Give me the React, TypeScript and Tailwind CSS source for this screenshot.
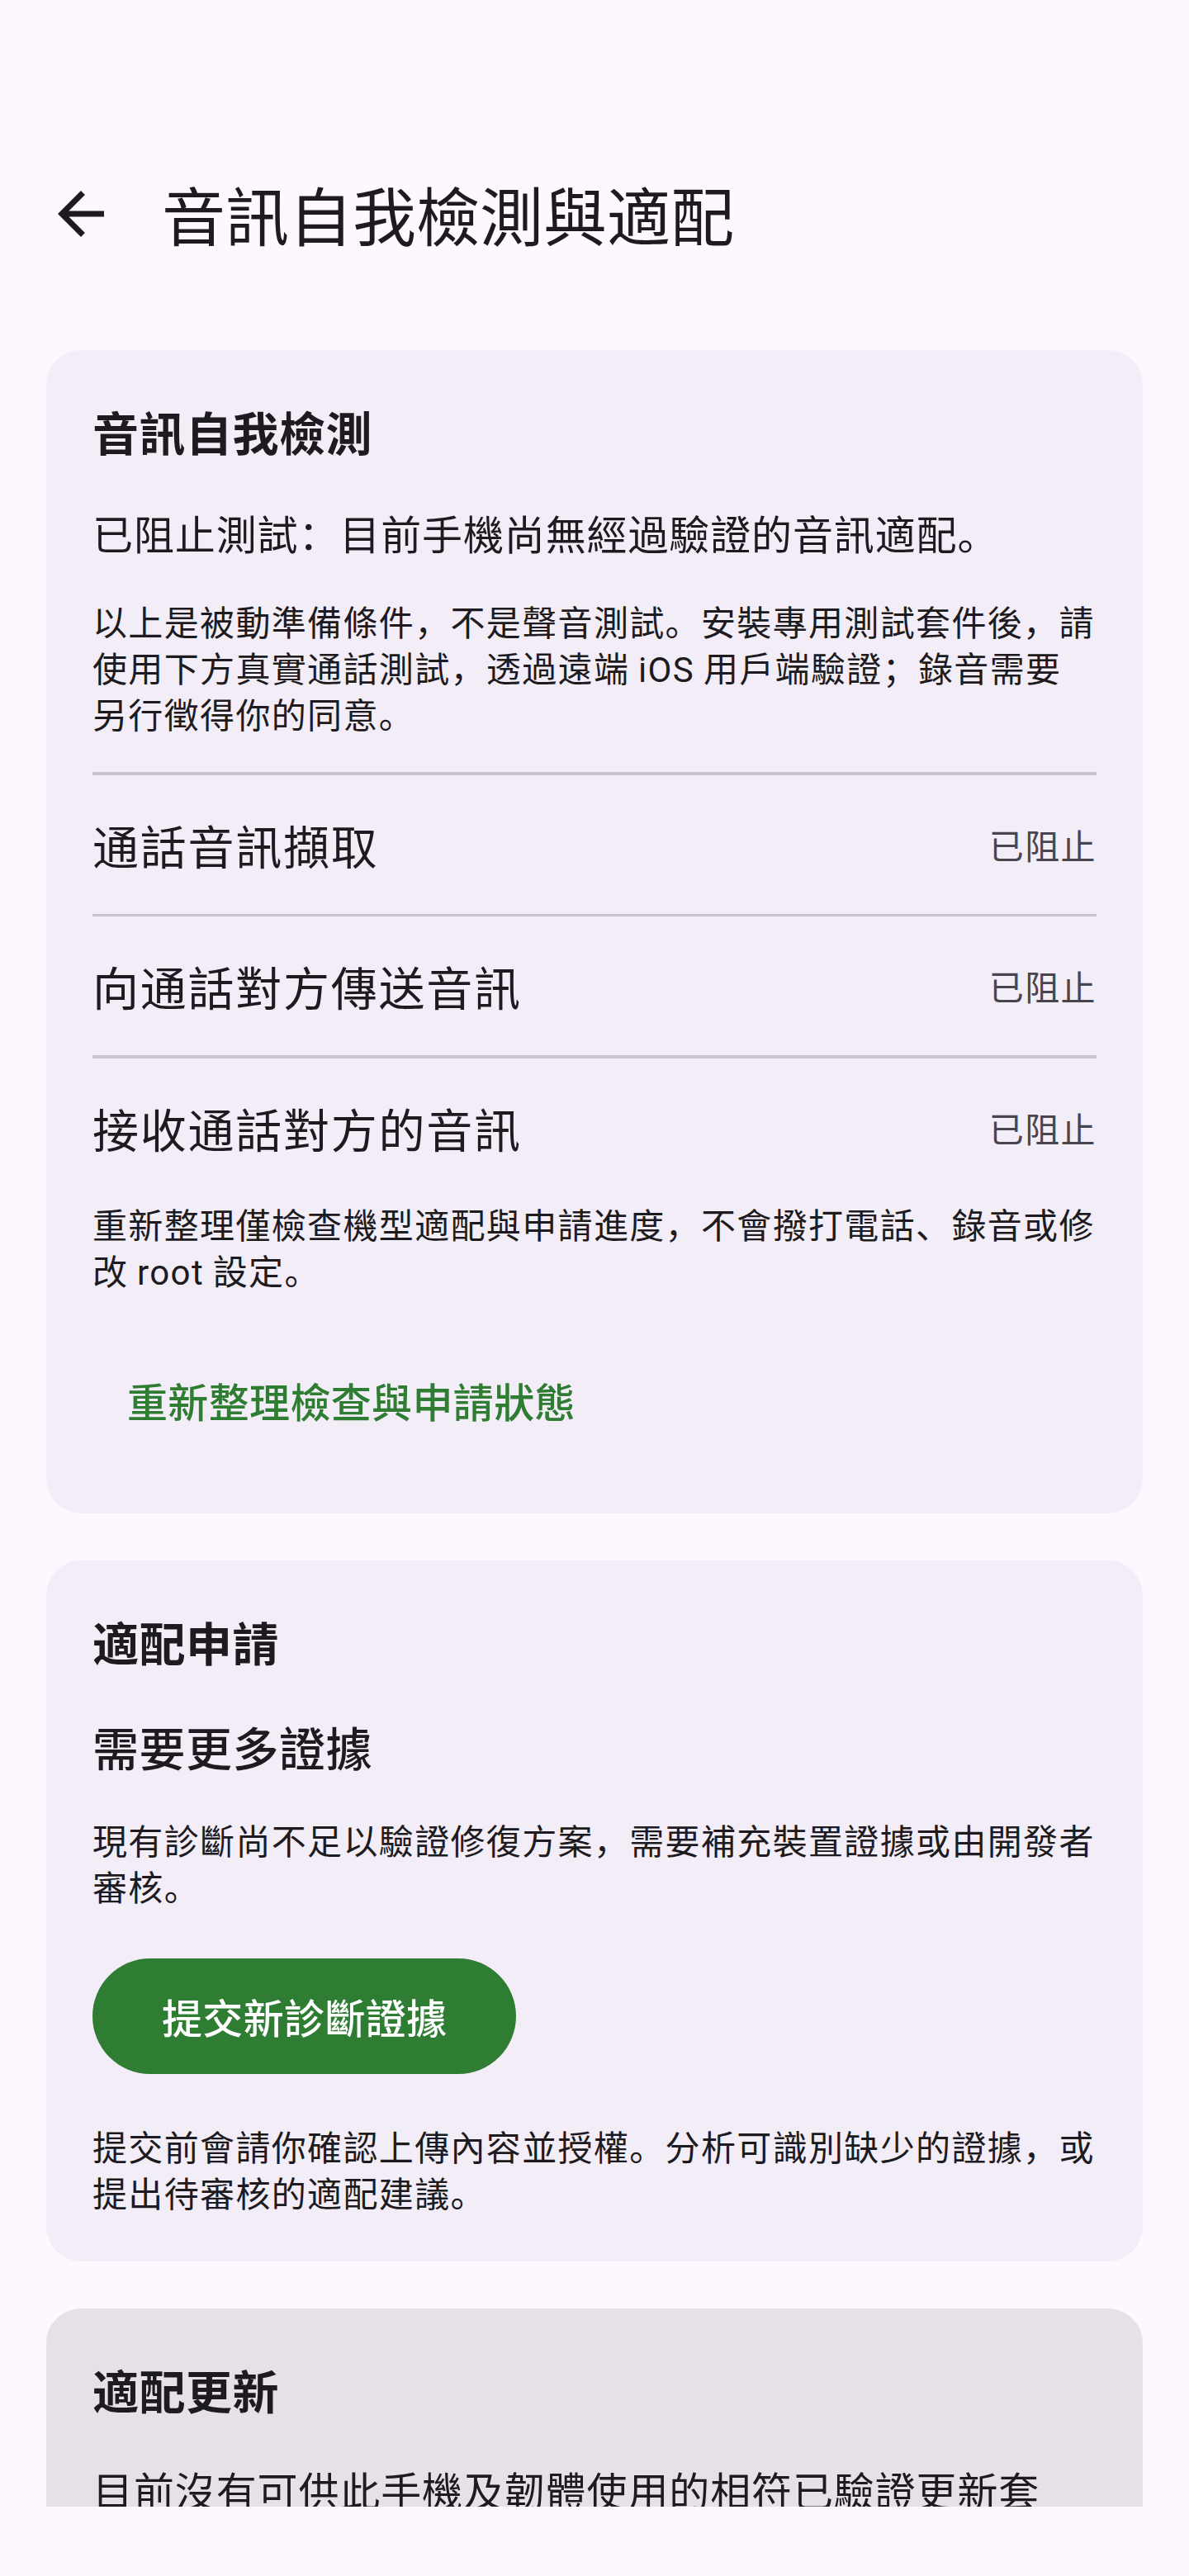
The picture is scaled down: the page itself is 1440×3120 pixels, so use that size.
import React from "react";

const FONT = '"Noto Sans CJK SC", "Noto Sans CJK TC", Roboto, sans-serif';

function Latin({ children }: { children: React.ReactNode }) {
  return (
    <span className="leading-none" style={{ fontFamily: 'Roboto, "Noto Sans CJK SC", sans-serif' }}>
      {children}
    </span>
  );
}

function Lines({ lines, className }: { lines: React.ReactNode[]; className: string }) {
  return (
    <div className={className}>
      {lines.map((l, i) => (
        <p key={i} className="whitespace-nowrap">
          {l}
        </p>
      ))}
    </div>
  );
}

function Row({ label }: { label: string }) {
  return (
    <div className="flex h-[168px] items-center justify-between">
      <span className="text-[56px] leading-[84px] tracking-[1.75px] text-[#1d1b20]">{label}</span>
      <span className="text-[42px] leading-[56px] tracking-[1.4px] text-[#49454f]">已阻止</span>
    </div>
  );
}

function Divider() {
  return <div className="h-[3.5px] w-full bg-[#cac4d0]" />;
}

export default function App() {
  return (
    <div className="relative h-[3120px] w-[1440px] overflow-hidden bg-[#fef7ff]" style={{ fontFamily: FONT }}>
      {/* status bar space */}
      <div className="h-[147px]" />
      {/* top app bar */}
      <div className="flex h-[224px] items-center">
        <div className="ml-[14px] flex h-[168px] w-[168px] items-center justify-center">
          <svg width="84" height="84" viewBox="0 0 24 24" fill="#1d1b20">
            <path d="M20 11H7.83l5.59-5.59L12 4l-8 8 8 8 1.41-1.41L7.83 13H20v-2z" />
          </svg>
        </div>
        <h1 className="ml-[14px] text-[77px] font-normal leading-[98px] text-[#1d1b20]">音訊自我檢測與適配</h1>
      </div>

      {/* scroll content */}
      <div className="h-[2665px] overflow-hidden">
        <div className="flex flex-col gap-[57px] px-[56px] pt-[53px]">
          {/* card 1 */}
          <section className="rounded-[42px] bg-[#f3edf7] px-[56px] pb-[53px] pt-[56px]">
            <h2 className="text-[56px] font-bold leading-[84px] tracking-[0.525px] text-[#1d1b20]">音訊自我檢測</h2>
            <p className="mt-[46px] text-[49px] leading-[70px] tracking-[0.875px] text-[#1d1b20]">
              已阻止測試：目前手機尚無經過驗證的音訊適配。
            </p>
            <Lines
              className="mt-[44px] text-[42px] leading-[56px] tracking-[1.35px] text-[#1d1b20]"
              lines={[
                "以上是被動準備條件，不是聲音測試。安裝專用測試套件後，請",
                <>
                  使用下方真實通話測試，透過遠端 <Latin>iOS</Latin> 用戶端驗證；錄音需要
                </>,
                "另行徵得你的同意。",
              ]}
            />
            <div className="mt-[43px]">
              <Divider />
              <Row label="通話音訊擷取" />
              <Divider />
              <Row label="向通話對方傳送音訊" />
              <Divider />
              <Row label="接收通話對方的音訊" />
            </div>
            <Lines
              className="mt-[4px] text-[42px] leading-[56px] tracking-[1.35px] text-[#1d1b20]"
              lines={[
                "重新整理僅檢查機型適配與申請進度，不會撥打電話、錄音或修",
                <>
                  改 <Latin>root</Latin> 設定。
                </>,
              ]}
            />
            <div className="mt-[46px] flex h-[168px] items-center">
              <button className="flex h-[140px] items-center rounded-full px-[42px] text-[49px] font-medium leading-[70px] tracking-[0.35px] text-[#2e7d32]">
                重新整理檢查與申請狀態
              </button>
            </div>
          </section>

          {/* card 2 */}
          <section className="rounded-[42px] bg-[#f3edf7] px-[56px] pb-[56px] pt-[56px]">
            <h2 className="text-[56px] font-bold leading-[84px] tracking-[0.525px] text-[#1d1b20]">適配申請</h2>
            <p className="mt-[43px] text-[56px] font-medium leading-[84px] tracking-[0.525px] text-[#1d1b20]">需要更多證據</p>
            <Lines
              className="mt-[43px] text-[42px] leading-[56px] tracking-[1.35px] text-[#1d1b20]"
              lines={["現有診斷尚不足以驗證修復方案，需要補充裝置證據或由開發者", "審核。"]}
            />
            <div className="mt-[46px] flex h-[168px] items-center">
              <button className="flex h-[140px] items-center rounded-full bg-[#2e7d32] px-[84px] text-[49px] font-medium leading-[70px] tracking-[0.35px] text-white">
                提交新診斷證據
              </button>
            </div>
            <Lines
              className="mt-[45px] text-[42px] leading-[56px] tracking-[1.35px] text-[#1d1b20]"
              lines={["提交前會請你確認上傳內容並授權。分析可識別缺少的證據，或", "提出待審核的適配建議。"]}
            />
          </section>

          {/* card 3 */}
          <section className="rounded-[42px] bg-[#e6e0e9] px-[56px] pb-[56px] pt-[56px]">
            <h2 className="text-[56px] font-bold leading-[84px] tracking-[0.525px] text-[#1d1b20]">適配更新</h2>
            <p className="mt-[44px] whitespace-nowrap text-[49px] leading-[70px] tracking-[0.875px] text-[#1d1b20]">
              目前沒有可供此手機及韌體使用的相符已驗證更新套
            </p>
          </section>
        </div>
      </div>
    </div>
  );
}
